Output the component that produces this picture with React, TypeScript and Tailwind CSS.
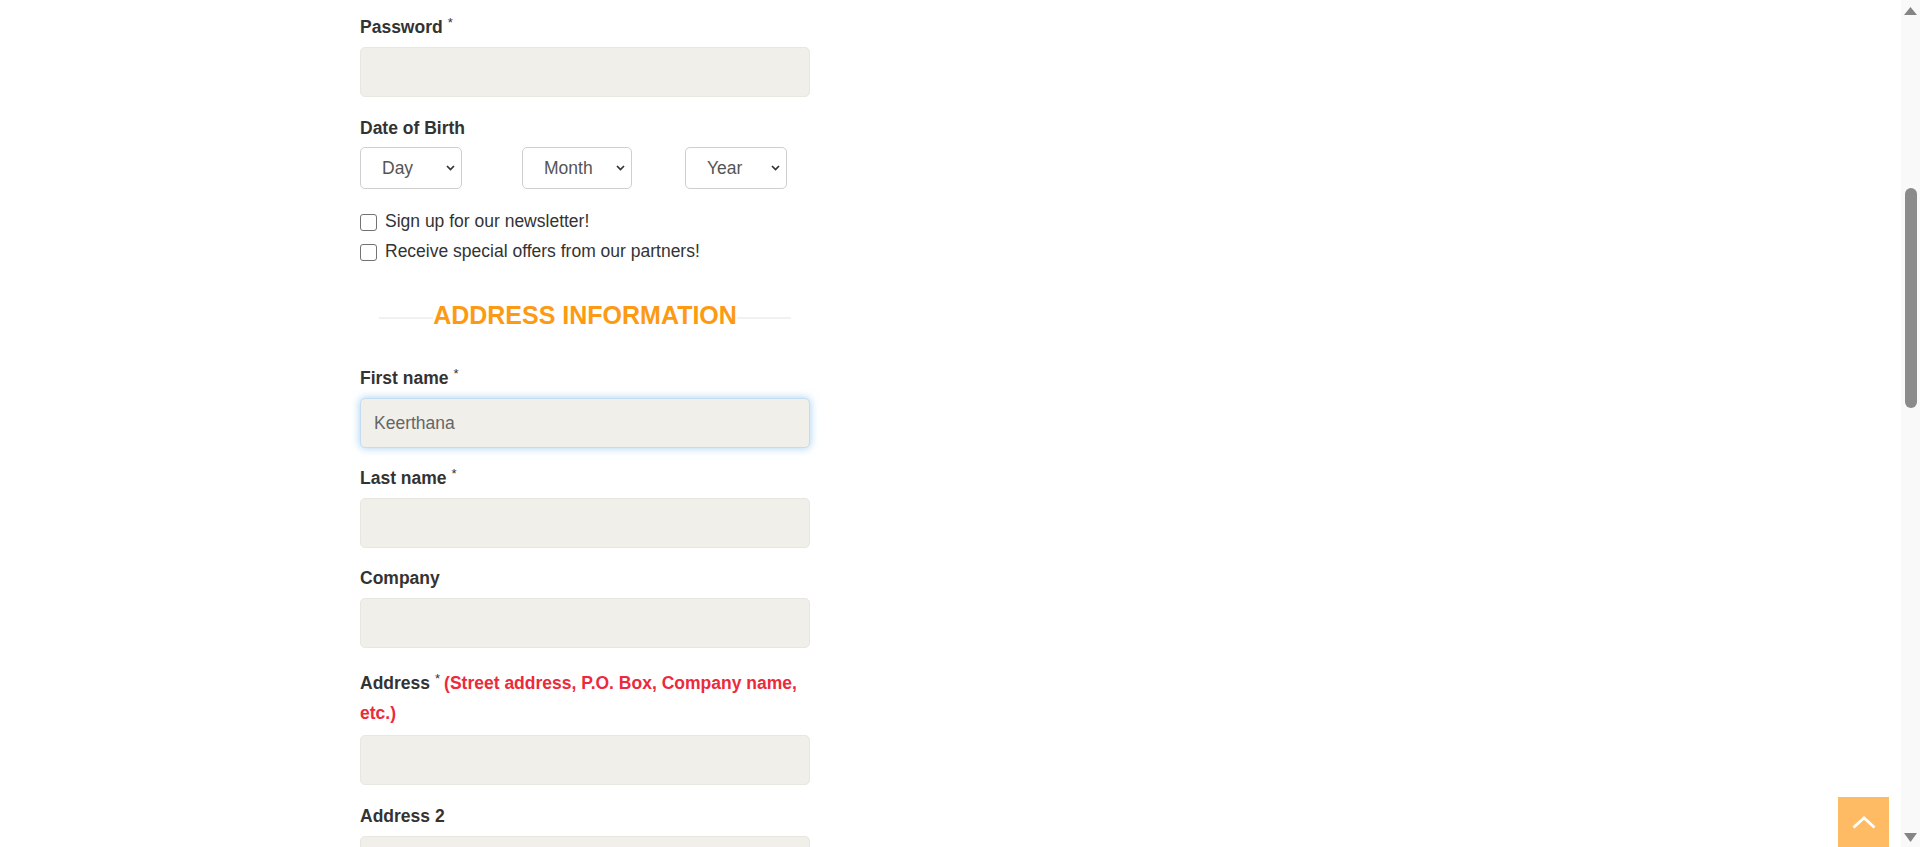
import React from "react";

const labelCls = "text-[17.5px] leading-[25px] font-bold text-[#333]";

function Star() {
  return <sup className="ml-[5px] text-[13px] font-normal text-[#333]">*</sup>;
}

function Field({
  label,
  required,
  value,
  focused,
  gap = "mb-[18px]",
}: {
  label: string;
  required?: boolean;
  value?: string;
  focused?: boolean;
  gap?: string;
}) {
  return (
    <div className={gap}>
      <div className={`${labelCls} mb-[7px]`}>
        {label}
        {required && <Star />}
      </div>
      <input
        readOnly
        value={value ?? ""}
        className={`block h-[50px] w-full rounded-[5px] border bg-[#f0efe9] px-[13px] text-[17.5px] text-[#666] outline-none ${
          focused
            ? "border-[#c4ddf2] shadow-[0_0_8px_rgba(102,175,233,0.6)]"
            : "border-[#e7e6df]"
        }`}
      />
    </div>
  );
}

function Select({ text, className }: { text: string; className: string }) {
  return (
    <div className={`relative h-[42px] ${className}`}>
      <select className="h-full w-full appearance-none rounded-[5px] border border-[#cfcfcf] bg-white pl-[21px] text-[17.5px] text-[#555] outline-none">
        <option>{text}</option>
      </select>
      <svg
        className="pointer-events-none absolute right-[7px] top-[18px]"
        width="9"
        height="6"
        viewBox="0 0 9 6"
      >
        <polyline points="1,1 4.5,4.5 8,1" fill="none" stroke="#333" strokeWidth="1.7" />
      </svg>
    </div>
  );
}

function Check({ text }: { text: string }) {
  return (
    <label className="flex h-[30px] items-center text-[17.5px] leading-[30px] text-[#333]">
      <span className="mr-[8px] mt-[3px] box-border block h-[17px] w-[17px] rounded-[3px] border border-[#727272] bg-white" />
      {text}
    </label>
  );
}

export default function App() {
  return (
    <div className="flex h-[847px] overflow-hidden bg-white font-['Liberation_Sans',Arial,sans-serif]">
      <main className="relative flex-1">
        <div className="ml-[360px] w-[450px] pt-[15px]">
          <Field label="Password" required gap="mb-[19px]" />

          <div className={`${labelCls} mb-[6px]`}>Date of Birth</div>
          <div className="flex">
            <Select text="Day" className="w-[102px]" />
            <Select text="Month" className="ml-[60px] w-[110px]" />
            <Select text="Year" className="ml-[53px] w-[102px]" />
          </div>

          <div className="mt-[17px]">
            <Check text="Sign up for our newsletter!" />
            <Check text="Receive special offers from our partners!" />
          </div>

          <div className="mx-[19px] mt-[31px] flex h-[36px] items-center">
            <div className="mt-[5px] h-[2px] flex-1 bg-[#f1f1f1]" />
            <h2 className="text-[25px] leading-[36px] font-bold text-[#fd9a14]">
              ADDRESS INFORMATION
            </h2>
            <div className="mt-[5px] h-[2px] flex-1 bg-[#f1f1f1]" />
          </div>

          <div className="mt-[33px]">
            <Field label="First name" required value="Keerthana" focused />
            <Field label="Last name" required />
            <Field label="Company" gap="mb-[20px]" />

            <div className="mb-[19px]">
              <div className="mb-[7px] text-[17.5px] leading-[30px] font-bold text-[#333]">
                <span>Address</span>
                <Star />
                <span className="ml-[4px] text-[#ec2a3c]">
                  (Street address, P.O. Box, Company name, etc.)
                </span>
              </div>
              <input
                readOnly
                className="block h-[50px] w-full rounded-[5px] border border-[#e7e6df] bg-[#f0efe9] outline-none"
              />
            </div>

            <Field label="Address 2" />
          </div>
        </div>

        <button className="absolute bottom-0 right-[12px] flex h-[50px] w-[51px] items-center justify-center bg-[#febb63]">
          <svg width="24" height="13" viewBox="0 0 24 13">
            <polyline points="1.5,11.5 12,2 22.5,11.5" fill="none" stroke="#fff" strokeWidth="2.8" />
          </svg>
        </button>
      </main>

      <aside className="flex w-[19px] flex-col items-center bg-[#f9f9f9]">
        <svg className="mt-[7px]" width="13" height="8" viewBox="0 0 13 8">
          <polygon points="6.5,0 13,8 0,8" fill="#858585" />
        </svg>
        <div className="ml-[1px] mt-[173px] h-[220px] w-[12px] rounded-full bg-[#8b8b8b]" />
        <div className="flex-1" />
        <svg className="mb-[5px]" width="13" height="9" viewBox="0 0 13 9">
          <polygon points="0,0 13,0 6.5,9" fill="#858585" />
        </svg>
      </aside>
    </div>
  );
}
